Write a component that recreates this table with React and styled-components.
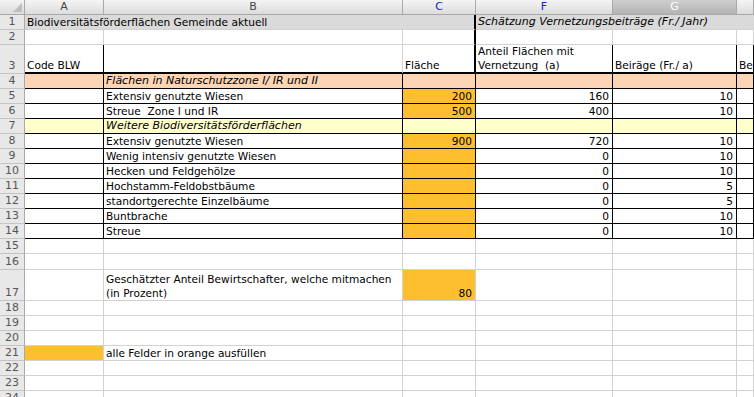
import React from "react";
import styled, { createGlobalStyle } from "styled-components";

const GlobalStyle = createGlobalStyle`
  html, body {
    margin: 0;
    padding: 0;
    background: #fff;
    overflow: hidden;
  }
  body {
    font-family: "DejaVu Sans", Verdana, sans-serif;
  }
`;

const GRAY = "#dadada";
const PEACH = "#fcd5b4";
const YELLOW = "#ffffcc";
const ORANGE = "#fdbf2d";

const line = (t) => {
  if (t === "k") return "1px solid #000";
  if (t === "K") return "2px solid #000";
  if (t === "n") return "1px solid transparent";
  return "1px solid #d2d2d2";
};

const Sheet = styled.div`
  display: grid;
  grid-template-columns: 25px 79px 299px 73px 137px 124px 1fr;
  grid-template-rows: ${(p) => p.$rows};
  width: 754px;
  height: 397px;
  overflow: hidden;
  font-size: 10.6px;
  color: #000;
`;

const Corner = styled.div`
  position: relative;
  background: linear-gradient(#f4f4f4, #dcdcdc);
  border-right: 1px solid #a9a9a9;
  border-bottom: 1px solid #a9a9a9;
  &::after {
    content: "";
    position: absolute;
    right: 2px;
    bottom: 2px;
    border-left: 9px solid transparent;
    border-bottom: 9px solid #bdbdbd;
  }
`;

const ColHead = styled.div`
  display: flex;
  align-items: center;
  justify-content: center;
  background: ${(p) =>
    p.$dark
      ? "linear-gradient(#cfcfcf, #b3b3b3)"
      : "linear-gradient(#f4f4f4, #dcdcdc)"};
  border-right: 1px solid #a9a9a9;
  border-bottom: 1px solid #a9a9a9;
  color: ${(p) => (p.$blue ? "#2020c0" : p.$dark ? "#fff" : "#444")};
  font-size: 11px;
  line-height: 14px;
`;

const RowHead = styled.div`
  display: flex;
  align-items: flex-end;
  justify-content: center;
  background: #e8e8e8;
  border-right: 1px solid #a9a9a9;
  border-bottom: 1px solid #c4c4c4;
  color: #555;
  font-size: 11px;
  line-height: 14px;
`;

const Cell = styled.div`
  grid-column: span ${(p) => p.$span || 1};
  display: flex;
  align-items: flex-end;
  justify-content: ${(p) => (p.$right ? "flex-end" : "flex-start")};
  background: ${(p) => p.$bg || "#fff"};
  border-right: ${(p) => line(p.$r)};
  border-bottom: ${(p) => line(p.$b)};
  padding: 0 3px 0 2px;
  font-style: ${(p) => (p.$italic ? "italic" : "normal")};
  font-size: ${(p) => (p.$italic ? "11px" : "inherit")};
  white-space: pre;
  line-height: 14px;
  overflow: hidden;
`;

const rows = [
  {
    h: 15,
    cells: [
      { span: 3, text: "Biodiversitätsförderflächen Gemeinde aktuell", bg: GRAY, r: "K" },
      { span: 3, text: "Schätzung Vernetzungsbeiträge (Fr./ Jahr)", bg: GRAY, italic: true, r: "n" },
    ],
  },
  { h: 15, cells: [{}, {}, { r: "K" }, {}, {}, {}] },
  {
    h: 29,
    cells: [
      { text: "Code BLW", r: "k", b: "K" },
      { b: "K" },
      { text: "Fläche", r: "K", b: "K" },
      { text: "Anteil Flächen mit\nVernetzung  (a)", r: "k", b: "K" },
      { text: "Beiräge (Fr./ a)", r: "k", b: "K" },
      { text: "Beiträge total", r: "k", b: "K" },
    ],
  },
  { band: PEACH, title: "Flächen in Naturschutzzone I/ IR und II" },
  { item: ["Extensiv genutzte Wiesen", "200", "160", "10"] },
  { item: ["Streue  Zone I und IR", "500", "400", "10"] },
  { band: YELLOW, title: "Weitere Biodiversitätsförderflächen" },
  { item: ["Extensiv genutzte Wiesen", "900", "720", "10"] },
  { item: ["Wenig intensiv genutzte Wiesen", "", "0", "10"] },
  { item: ["Hecken und Feldgehölze", "", "0", "10"] },
  { item: ["Hochstamm-Feldobstbäume", "", "0", "5"] },
  { item: ["standortgerechte Einzelbäume", "", "0", "5"] },
  { item: ["Buntbrache", "", "0", "10"] },
  { item: ["Streue", "", "0", "10"] },
  { h: 15 },
  { h: 16 },
  {
    h: 31,
    cells: [
      {},
      { text: "Geschätzter Anteil Bewirtschafter, welche mitmachen\n(in Prozent)" },
      { text: "80", bg: ORANGE, right: true },
      {},
      {},
      {},
    ],
  },
  { h: 15 },
  { h: 15 },
  { h: 15 },
  { h: 15, cells: [{ bg: ORANGE }, { text: "alle Felder in orange ausfüllen" }, {}, {}, {}, {}] },
  { h: 15 },
  { h: 15 },
  { h: 15 },
];

const expand = (row) => {
  if (row.band) {
    return [
      { bg: row.band, r: "k", b: "k" },
      { bg: row.band, r: "k", b: "k", italic: true, text: row.title },
      { bg: row.band, r: "k", b: "k" },
      { bg: row.band, r: "k", b: "k" },
      { bg: row.band, r: "k", b: "k" },
      { bg: row.band, r: "k", b: "k" },
    ];
  }
  if (row.item) {
    const [name, area, share, fee] = row.item;
    return [
      { r: "k", b: "k" },
      { r: "k", b: "k", text: name },
      { r: "k", b: "k", text: area, bg: ORANGE, right: true },
      { r: "k", b: "k", text: share, right: true },
      { r: "k", b: "k", text: fee, right: true },
      { r: "k", b: "k" },
    ];
  }
  return row.cells || [{}, {}, {}, {}, {}, {}];
};

const heights = rows.map((r) => r.h || 15);
const template = ["15px", ...heights.map((h) => `${h}px`)].join(" ");

const columns = [
  { label: "A" },
  { label: "B" },
  { label: "C", blue: true },
  { label: "F", blue: true },
  { label: "G", dark: true },
  { label: "" },
];

export default function App() {
  return (
    <>
      <GlobalStyle />
      <Sheet $rows={template}>
        <Corner />
        {columns.map((c, i) => (
          <ColHead key={i} $blue={c.blue} $dark={c.dark}>
            {c.label}
          </ColHead>
        ))}
        {rows.map((row, ri) => (
          <React.Fragment key={ri}>
            <RowHead>{ri + 1}</RowHead>
            {expand(row).map((c, ci) => (
              <Cell
                key={ci}
                $span={c.span}
                $bg={c.bg}
                $r={c.r}
                $b={c.b}
                $italic={c.italic}
                $right={c.right}
              >
                {c.text}
              </Cell>
            ))}
          </React.Fragment>
        ))}
      </Sheet>
    </>
  );
}
